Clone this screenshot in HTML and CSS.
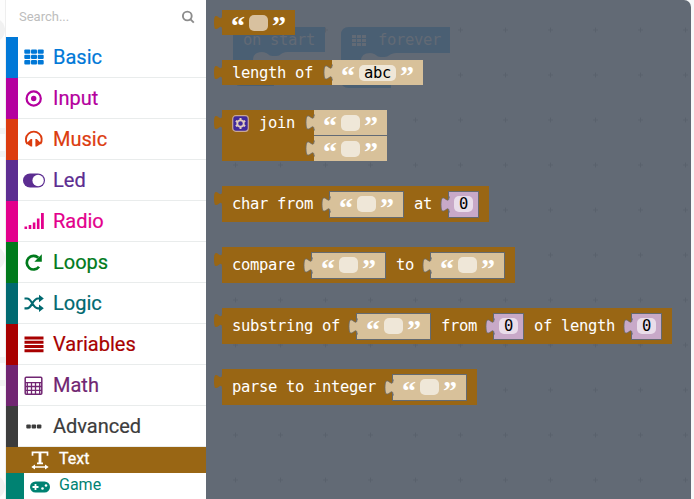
FILE: index.html
```
<!DOCTYPE html>
<html lang="en">
<head>
<meta charset="utf-8">
<title>Blocks editor</title>
<link rel="stylesheet" href="styles.css">
</head>
<body>
<svg class="defs" width="0" height="0" aria-hidden="true">
  <symbol id="tab" viewBox="0 0 9 25" overflow="visible"><path d="M9 5H8c0 10-8-8-8 7.500s8-2.500 8 7.500h1"/></symbol>
</svg>
<div class="app">
  <div class="margin"><i class="dot d1"></i><i class="line l1"></i><i class="line l2"></i><i class="dot d2"></i><i class="line l3"></i><i class="line l4"></i><i class="dot d3"></i></div>
  <nav class="toolbox">
    <div class="search"><span>Search...</span>
      <svg width="14" height="14" viewBox="0 0 14 14" fill="none" stroke="#8c8c8c" stroke-width="1.900"><circle cx="6.300" cy="6" r="4.400"/><path d="M9.500 9.300L12.800 12.600"/></svg></div>
    <div class="cat basic"><svg class="icon" viewBox="0 0 24 24" fill="currentColor"><rect x="2.300" y="4.500" width="6" height="4.300" rx="1"/><rect x="9" y="4.500" width="6" height="4.300" rx="1"/><rect x="15.700" y="4.500" width="6" height="4.300" rx="1"/><rect x="2.300" y="9.800" width="6" height="4.300" rx="1"/><rect x="9" y="9.800" width="6" height="4.300" rx="1"/><rect x="15.700" y="9.800" width="6" height="4.300" rx="1"/><rect x="2.300" y="15.100" width="6" height="4.300" rx="1"/><rect x="9" y="15.100" width="6" height="4.300" rx="1"/><rect x="15.700" y="15.100" width="6" height="4.300" rx="1"/></svg><span>Basic</span></div>
    <div class="cat input"><svg class="icon" viewBox="0 0 24 24" fill="none" stroke="currentColor" stroke-width="2.200"><circle cx="11.700" cy="12.500" r="7.100"/><circle cx="11.700" cy="12.500" r="2.700" fill="currentColor" stroke="none"/></svg><span>Input</span></div>
    <div class="cat music"><svg class="icon" viewBox="0 0 24 24" fill="currentColor"><path d="M5.300 17A7.900 7.900 0 1 1 18.300 17" fill="none" stroke="currentColor" stroke-width="1.900"/><path d="M8.800 12h1.400v7.500H8.800L4.300 16.500zM14.800 12h-1.400v7.500h1.400l4.500-3z"/></svg><span>Music</span></div>
    <div class="cat led"><svg class="icon" viewBox="0 0 24 24"><rect x="1" y="5.500" width="22" height="14" rx="7" fill="currentColor"/><circle cx="16.100" cy="12.500" r="5.700" fill="#fff"/></svg><span>Led</span></div>
    <div class="cat radio"><svg class="icon" viewBox="0 0 24 24" fill="currentColor"><path d="M2.500 17.500h2.600v2.500H2.500zM6.700 16h2.600v4H6.700zM10.800 13.500h2.600V20h-2.600zM14.900 9.500h2.600V20h-2.600zM19 4h2.800v16H19z"/></svg><span>Radio</span></div>
    <div class="cat loops"><svg class="icon" viewBox="0 0 24 24"><path d="M17 16.800A6.800 6.800 0 1 1 16.300 7.800" fill="none" stroke="currentColor" stroke-width="2.700"/><path d="M19.800 4.200V11.700h-7.500z" fill="currentColor"/></svg><span>Loops</span></div>
    <div class="cat logic"><svg class="icon" viewBox="0 0 24 24"><path d="M2.500 7.500H5C10 7.500 10.500 17.300 16 17.300H18M2.500 17.300H5C10 17.300 10.500 7.500 16 7.500H18" fill="none" stroke="currentColor" stroke-width="2.200"/><path d="M17 3.700L21.800 7.500L17 11.300zM17 13.500L21.800 17.300L17 21.100z" fill="currentColor"/></svg><span>Logic</span></div>
    <div class="cat variables"><svg class="icon" viewBox="0 0 24 24"><path d="M2.500 6h19M2.500 10.200h19M2.500 14.500h19M2.500 18.800h19" stroke="currentColor" stroke-width="2.900"/></svg><span>Variables</span></div>
    <div class="cat math"><svg class="icon" viewBox="0 0 24 24"><rect x="3.200" y="4.200" width="16.600" height="17" rx="1" fill="none" stroke="currentColor" stroke-width="1.500"/><path d="M3 9.700h17M5.300 10v11M9.500 10v11M13.500 10v11M17.700 10v11M4 13.500h16M4 17.400h16" fill="none" stroke="currentColor" stroke-width="1.300"/></svg><span>Math</span></div>
    <div class="cat advanced"><svg class="icon" viewBox="0 0 24 24" fill="currentColor"><rect x="4.300" y="10.500" width="4.500" height="4" rx="1"/><rect x="9.600" y="10.500" width="4.500" height="4" rx="1"/><rect x="14.900" y="10.500" width="4.500" height="4" rx="1"/></svg><span>Advanced</span></div>
    <div class="sub text"><svg class="icon" viewBox="0 0 24 24" fill="none" stroke="currentColor"><path stroke-width="1.700" d="M4.500 7.800V4.300H19.500V7.800M9 15.300h6"/><path stroke-width="2.800" d="M12 4.500V15.500"/><path stroke-width="1.500" d="M5.500 19H18.500"/><path fill="currentColor" stroke="none" d="M3.300 19l3.700-2.500v5zM20.700 19l-3.700-2.500v5z"/></svg><span>Text</span></div>
    <div class="sub game"><svg class="icon" viewBox="0 0 24 24"><rect x="2" y="6.500" width="20" height="11" rx="5.500" fill="currentColor"/><path d="M4.500 12h6M7.500 9v6" stroke="#fff" stroke-width="1.800"/><circle cx="14.500" cy="13.500" r="1.300" fill="#fff"/><circle cx="18" cy="10.500" r="1.300" fill="#fff"/></svg><span>Game</span></div>
  </nav>
  <main class="workspace">
    <svg class="canvas" width="485" height="499" viewBox="206 0 485 499">
      <defs><pattern id="cross" x="213" y="7.500" width="45" height="45" patternUnits="userSpaceOnUse"><path d="M20 22.500h5M22.500 20v5" stroke="#59616c"/></pattern></defs>
      <rect x="206" width="485" height="499" fill="url(#cross)"/>
      <g fill="#4a5f73">
        <path d="M233 27H325V52H287C281 52 281 56 276 56H273C268 56 268 52 262 52Q253 52 253 60V80H274V86H241Q233 86 233 78Z"/>
        <path d="M349 27H450V53H396C390 53 389 57 384 57H381C376 57 376 53 370 53Q361 53 361 61V80H391V88H349Q341 88 341 80V35Q341 27 349 27Z"/>
      </g>
      <g class="ghost"><text x="243" y="45">on start</text><text x="378" y="45">forever</text><path d="M352 35h4v3h-4zM357 35h4v3h-4zM362 35h4v3h-4zM352 39h4v3h-4zM357 39h4v3h-4zM362 39h4v3h-4zM352 43h4v3h-4zM357 43h4v3h-4zM362 43h4v3h-4z"/></g>
    </svg>
    <div class="flyout">
      <div class="block"><svg class="tab"><use href="#tab"/></svg><div class="quoted plain"><b>“</b><span class="field"></span><b>”</b></div></div>
      <div class="block length"><svg class="tab"><use href="#tab"/></svg><span class="label">length of</span><div class="value flush"><svg class="tab"><use href="#tab"/></svg><b>“</b><span class="field abc">abc</span><b>”</b></div></div>
      <div class="block join"><svg class="tab"><use href="#tab"/></svg><svg class="gear" width="17" height="17" viewBox="0 0 17 17"><rect x=".7" y=".7" width="15.600" height="15.600" rx="3" fill="#40299b" stroke="#c8a793" stroke-width="1.200"/><circle cx="8.500" cy="8.500" r="3.200" fill="none" stroke="#e0cbbd" stroke-width="1.800"/><path d="M8.500 3v2M8.500 12v2M3.800 5.800l1.700 1M11.500 10.200l1.700 1M3.800 11.200l1.700-1M11.500 6.800l1.700-1" stroke="#e0cbbd" stroke-width="2"/></svg><span class="label">join</span><div class="stack"><div class="value flush"><svg class="tab"><use href="#tab"/></svg><b>“</b><span class="field"></span><b>”</b></div><div class="value flush"><svg class="tab"><use href="#tab"/></svg><b>“</b><span class="field"></span><b>”</b></div></div></div>
      <div class="block tall"><svg class="tab"><use href="#tab"/></svg><span class="label">char from</span><div class="value"><svg class="tab"><use href="#tab"/></svg><b>“</b><span class="field"></span><b>”</b></div><span class="label">at</span><div class="value num"><svg class="tab"><use href="#tab"/></svg><span class="field">0</span></div></div>
      <div class="block tall"><svg class="tab"><use href="#tab"/></svg><span class="label">compare</span><div class="value"><svg class="tab"><use href="#tab"/></svg><b>“</b><span class="field"></span><b>”</b></div><span class="label">to</span><div class="value"><svg class="tab"><use href="#tab"/></svg><b>“</b><span class="field"></span><b>”</b></div></div>
      <div class="block tall"><svg class="tab"><use href="#tab"/></svg><span class="label">substring of</span><div class="value"><svg class="tab"><use href="#tab"/></svg><b>“</b><span class="field"></span><b>”</b></div><span class="label">from</span><div class="value num"><svg class="tab"><use href="#tab"/></svg><span class="field">0</span></div><span class="label">of length</span><div class="value num"><svg class="tab"><use href="#tab"/></svg><span class="field">0</span></div></div>
      <div class="block tall"><svg class="tab"><use href="#tab"/></svg><span class="label">parse to integer</span><div class="value"><svg class="tab"><use href="#tab"/></svg><b>“</b><span class="field"></span><b>”</b></div></div>
    </div>
  </main>
</div>
</body>
</html>
```
FILE: styles.css
```
* { box-sizing: border-box; }
body { margin: 0; background: #f7f8f9; overflow: hidden; }
.defs { position: absolute; }
.app { display: flex; height: 499px; width: 694px; }
.margin { width: 6px; position: relative; overflow: hidden; background: #fdfdfd; border-right: 1px solid #eee; flex: none; }
.dot { position: absolute; right: 0; width: 24px; height: 24px; border-radius: 50%; background: #f1f1f1; }
.line { position: absolute; left: 0; width: 5px; height: 6px; background: #f3f3f3; }
.d1 { top: 18px; } .d2 { top: 246px; } .d3 { top: 475px; }
.l1 { top: 128px; } .l2 { top: 151px; } .l3 { top: 357px; } .l4 { top: 380px; }
.toolbox { width: 200px; flex: none; background: #fff; font-family: Roboto, sans-serif; }
.search { height: 37px; display: flex; align-items: center; justify-content: space-between; padding: 0 11px 4px 13px; font-size: 13px; color: #bdbdbd; }
.cat { height: 41px; display: flex; align-items: center; border-left: 12px solid currentColor; padding: 0 0 2px 4px; font-size: 20px; position: relative; -webkit-text-stroke: .2px; }
.cat::after { content: ""; position: absolute; left: 0; right: 0; bottom: 0; height: 1px; background: #e9ecec; }
.cat .icon { width: 24px; height: 24px; margin-right: 7px; flex: none; }
.basic { color: #0078d7; } .input { color: #b4009e; } .music { color: #dc3c0f; } .led { color: #5c2d91; } .radio { color: #e3008c; }
.loops { color: #007a1c; } .logic { color: #006970; } .variables { color: #a80000; } .math { color: #712672; } .advanced { color: #3c3c3c; }
.sub { height: 26px; display: flex; align-items: center; font-size: 16px; border-left: 18px solid #008272; padding: 0 0 4px 4px; }
.sub .icon { width: 24px; height: 24px; margin-right: 7px; flex: none; }
.text { background: #996614; color: #fff; border-color: #996614; -webkit-text-stroke: .3px; }
.text .icon { margin-top: 3px; }
.game { color: #008272; padding-bottom: 3px; }
.game .icon { margin-top: 5px; }
.workspace { position: relative; width: 485px; background: #626a75; border-radius: 0 7px 0 0; font-family: "DejaVu Sans Mono", monospace; font-size: 15.500px; letter-spacing: -.332px; }
.canvas { position: absolute; left: 0; top: 0; }
.ghost { fill: #626a75; }
.flyout { position: relative; display: flex; flex-direction: column; align-items: flex-start; gap: 25px; padding: 10px 0 0 16px; }
.block { position: relative; height: 25px; display: flex; align-items: center; background: #996614; color: #fff; }
.tab { position: absolute; left: -8px; top: 0; width: 9px; height: 25px; fill: #996614; overflow: visible; }
.label { padding: 0 8px 0 10px; white-space: pre; line-height: 20px; }
.length > .label { width: 110px; flex: none; }
.tall { height: 36px; padding-right: 10px; }
.quoted, .value { display: flex; align-items: center; justify-content: center; gap: 4px; width: 73px; height: 25px; flex: none; }
.value { position: relative; background: #d8c19a; width: 75px; height: 27px; border: 1px solid #646a70; margin-left: 8px; }
.value .tab { fill: #d8c19a; stroke: #646a70; stroke-width: .8; }
.flush { border: 0; width: 73px; height: 25px; margin-left: 0; }
.length .flush { width: 91px; }
b { width: 14px; height: 25px; font: bold 28px/31px "Liberation Serif", serif; letter-spacing: 0; color: #fff; text-align: center; }
.field { width: 19px; height: 16px; border-radius: 5px; background: #efe7d8; color: #000; text-align: center; line-height: 16px; }
.plain .field { background: #d8c19f; }
.abc { width: 37px; }
.num { width: 31px; background: #c8a9c8; }
.num .tab { fill: #c8a9c8; }
.num .field { background: #e9ddea; }
.join { height: 51px; align-items: flex-start; }
.gear { margin: 5px 0 0 10px; }
.join > .label { margin-top: 3px; width: 65px; }
.stack { display: flex; flex-direction: column; gap: 1px; background: #626a75; }
```
